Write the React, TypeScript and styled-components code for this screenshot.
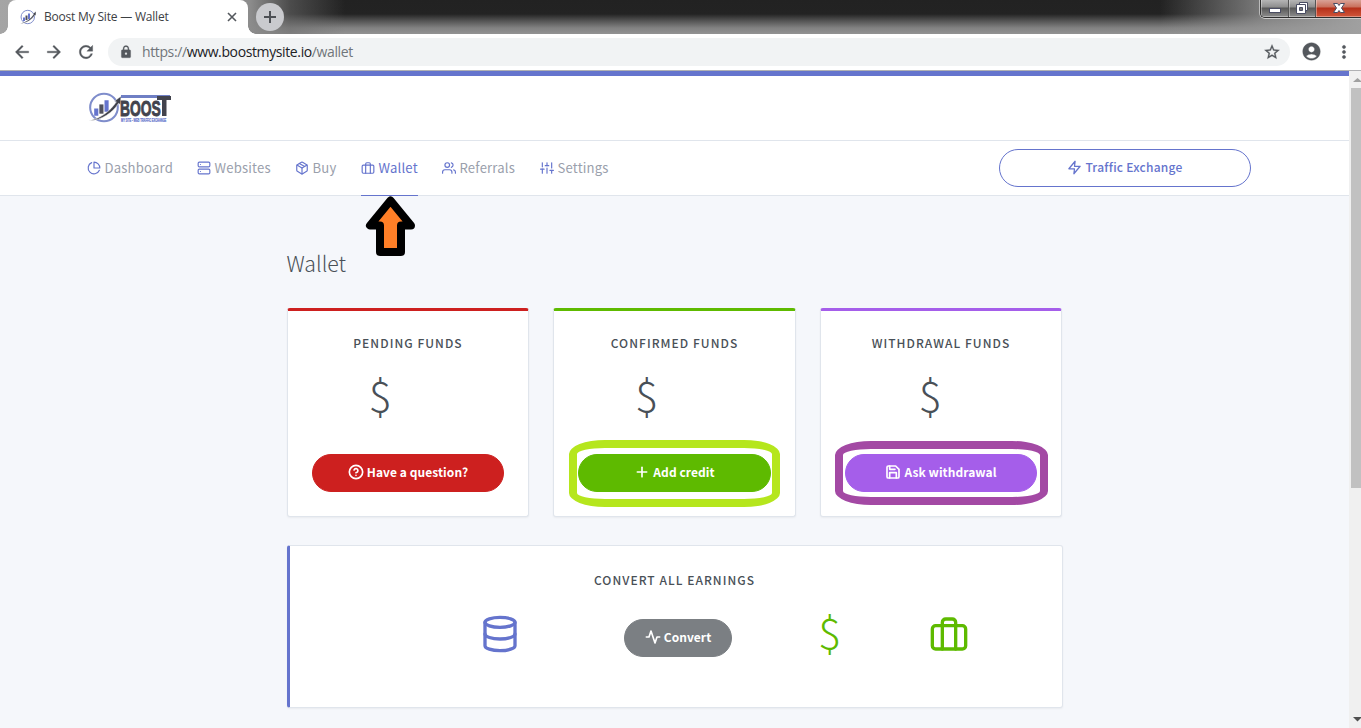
import React from 'react';
import styled, { createGlobalStyle } from 'styled-components';
import {
  FiPieChart, FiServer, FiPackage, FiBriefcase, FiUsers, FiSliders,
  FiZap, FiHelpCircle, FiPlus, FiSave, FiDatabase, FiActivity,
} from 'react-icons/fi';
import { MdArrowBack, MdArrowForward, MdRefresh, MdLock, MdStarBorder, MdAccountCircle, MdMoreVert } from 'react-icons/md';

const sans = `"Noto Sans CJK SC", "Open Sans", sans-serif`;

const Global = createGlobalStyle`
  * { box-sizing: border-box; }
  body { margin: 0; overflow: hidden; font-family: ${sans}; color: #495057; }
`;

const Window = styled.div`
  width: 1361px;
  height: 728px;
  display: flex;
  flex-direction: column;
  overflow: hidden;
  background: #fff;
`;

const TabStrip = styled.div`
  height: 34px;
  flex: none;
  display: flex;
  padding-left: 8px;
  position: relative;
  background:
    linear-gradient(90deg, #a5a5a5 0, #8c8c8c 250px, rgba(110,110,110,.55) 290px, rgba(60,60,60,0) 345px, rgba(60,60,60,0) 1160px, rgba(150,150,150,.75) 1260px, #a0a0a0 1361px),
    linear-gradient(180deg, #222 0, #232323 14px, #555 21px, #828282 28px, #929292 34px);
`;

const Tab = styled.div`
  width: 240px;
  height: 34px;
  display: flex;
  align-items: center;
  padding: 0 10px 0 12px;
  background: #fff;
  border-radius: 8px 8px 0 0;
  position: relative;
  &::before, &::after {
    content: '';
    position: absolute;
    bottom: 0;
    width: 8px;
    height: 8px;
  }
  &::before { left: -8px; background: radial-gradient(circle at 0 0, transparent 7.5px, #fff 8px); }
  &::after { right: -8px; background: radial-gradient(circle at 100% 0, transparent 7.5px, #fff 8px); }
`;

const TabTitle = styled.span`
  flex: 1;
  margin-left: 8px;
  font: 12px/16px "Open Sans", sans-serif;
  letter-spacing: -0.2px;
  color: #3c4043;
  white-space: nowrap;
`;

const NewTab = styled.div`
  width: 28px;
  height: 28px;
  margin: 3px 0 0 8px;
  border-radius: 50%;
  background: #c9cace;
  display: flex;
  align-items: center;
  justify-content: center;
`;

const Controls = styled.div`
  position: absolute;
  top: 0;
  right: 0;
  width: 101px;
  height: 18px;
  display: flex;
  border: 1px solid #2f2f2f;
  border-width: 0 0 1px 1px;
  border-radius: 0 0 0 5px;
  box-shadow: 0 1px 0 #ccc, -1px 0 0 #bbb;
  overflow: hidden;
`;

const Control = styled.div<{ $w: number; $close?: boolean }>`
  width: ${p => p.$w}px;
  flex: none;
  display: flex;
  justify-content: center;
  border-right: 1px solid ${p => (p.$close ? '#a33' : '#555')};
  box-shadow: inset 0 -1px 0 rgba(255,255,255,.35), inset 1px 0 0 rgba(255,255,255,.35);
  background: ${p => p.$close
    ? 'linear-gradient(180deg, #d9a296 0, #c9705c 7px, #b5301a 8px, #d1563a 17px)'
    : 'linear-gradient(180deg, #b5b5b5 0, #8e8e8e 7px, #585858 8px, #8d8d8d 17px)'};
`;

const Toolbar = styled.div`
  height: 37px;
  flex: none;
  display: flex;
  align-items: center;
  padding: 0 7px 1px 12px;
  border-bottom: 1px solid #b0b1b4;
  color: #54585d;
  svg { flex: none; }
  path:not([fill="none"]) { stroke: currentColor; stroke-width: 0.4px; }
`;

const NavButtons = styled.div`
  display: flex;
  gap: 12px;
`;

const Address = styled.div`
  width: 1182px;
  flex: none;
  height: 28px;
  margin-left: 12px;
  padding: 0 9px 0 11px;
  display: flex;
  align-items: center;
  border-radius: 14px;
  background: #f1f3f4;
`;

const Url = styled.span`
  flex: 1;
  margin-left: 9px;
  font: 14px/20px "Open Sans", sans-serif;
  letter-spacing: -0.38px;
  color: #70757a;
  b { font-weight: 400; color: #202124; }
`;

const ToolbarEnd = styled.div`
  display: flex;
  align-items: center;
  gap: 12px;
  margin-left: 11px;
`;

const Viewport = styled.div`
  flex: 1;
  min-height: 0;
  display: flex;
`;

const Page = styled.div`
  width: 1349px;
  position: relative;
  background: #f5f7fb;
  border-top: 5px solid #6574cd;
`;

const Header = styled.header`
  height: 65px;
  padding: 15px 0 0 88px;
  background: #fff;
  border-bottom: 1px solid #e0e5ec;
`;

const NavBar = styled.nav`
  height: 55px;
  display: flex;
  justify-content: space-between;
  padding: 0 98px 0 87px;
  background: #fff;
  border-bottom: 1px solid #e0e5ec;
`;

const NavItems = styled.div`
  display: flex;
  gap: 24px;
`;

const NavItem = styled.a<{ $active?: boolean; $w: number }>`
  width: ${p => p.$w}px;
  height: 55px;
  display: flex;
  align-items: center;
  gap: 4px;
  font-size: 13.1px;
  line-height: 20px;
  letter-spacing: 0.2px;
  white-space: nowrap;
  color: ${p => (p.$active ? '#6574cd' : '#9aa0ac')};
  border-bottom: 1px solid ${p => (p.$active ? '#6574cd' : 'transparent')};
  svg { color: #6574cd; flex: none; margin-left: -0.5px; }
`;

const Pill = styled.button<{ $bg?: string; $w: number }>`
  width: ${p => p.$w}px;
  height: 38px;
  flex: none;
  display: flex;
  align-items: center;
  justify-content: center;
  gap: 3px;
  padding: 0 0 2px;
  border-radius: 19px;
  border: 1px solid ${p => p.$bg || '#6574cd'};
  background: ${p => p.$bg || '#fff'};
  color: ${p => (p.$bg ? '#fff' : '#6574cd')};
  font: ${p => (p.$bg ? 700 : 500)} 12px/18px ${sans};
  letter-spacing: ${p => (p.$bg ? 0.06 : 0.25)}px;
  white-space: nowrap;
  svg { stroke-width: ${p => (p.$bg ? 2.5 : 2)}px; }
`;

const NavAction = styled.div`
  padding-top: 8px;
`;

const Content = styled.main`
  width: 776px;
  margin-left: 287px;
  padding-top: 49px;
`;

const Title = styled.h1`
  margin: 0 0 0 -0.5px;
  font-size: 21.3px;
  font-weight: 300;
  line-height: 36px;
`;

const Cards = styled.div`
  width: 775px;
  display: grid;
  grid-template-columns: 242px 243px 242px;
  gap: 24px;
  margin-top: 27px;
`;

const Card = styled.section<{ $accent: string }>`
  height: 209px;
  display: flex;
  flex-direction: column;
  align-items: center;
  position: relative;
  padding-top: 20px;
  background: #fff;
  border: 1px solid #e0e5ec;
  border-top: 3px solid ${p => p.$accent};
  border-radius: 3px;
  box-shadow: 0 1px 2px rgba(0,0,0,.05);
`;

const CardTitle = styled.h2`
  margin: 0;
  font-size: 12px;
  font-weight: 500;
  line-height: 24px;
  letter-spacing: 1.04px;
  white-space: nowrap;
`;

const Amount = styled.div<{ $shift?: number }>`
  height: 60px;
  margin: 8px 0 31px;
  padding-right: ${p => p.$shift || 0}px;
  font-size: 43px;
  font-weight: 300;
  line-height: 60px;
`;

const Ring = styled.div<{ $color: string; $w: number; $h: number; $x: number; $y: number }>`
  position: absolute;
  left: ${p => p.$x}px;
  top: ${p => p.$y}px;
  width: ${p => p.$w}px;
  height: ${p => p.$h}px;
  border: 8px solid ${p => p.$color};
  border-radius: 36px / 14px;
`;

const ConvertCard = styled.section`
  height: 163px;
  margin-top: 28px;
  padding: 22px 0 0;
  background: #fff;
  border: 1px solid #e0e5ec;
  border-left: 3px solid #6574cd;
  border-radius: 3px;
  box-shadow: 0 1px 2px rgba(0,0,0,.05);
  text-align: center;
  h2 { padding-right: 3px; }
`;

const ConvertRow = styled.div`
  display: flex;
  align-items: center;
  height: 60px;
  margin-top: 13px;
  padding-left: 190px;
`;

const Slot = styled.div<{ $w: number; $top?: number; $color?: string }>`
  width: ${p => p.$w}px;
  height: 60px;
  padding-top: ${p => p.$top || 0}px;
  color: ${p => p.$color || 'inherit'};
  text-align: left;
  svg { display: block; }
`;

const Currency = styled.div`
  margin: -5px 0 0 -1px;
  font-size: 43px;
  font-weight: 300;
  line-height: 60px;
`;

const Pointer = styled.svg`
  position: absolute;
  left: 364px;
  top: 118px;
`;

const Scrollbar = styled.div`
  width: 12px;
  display: flex;
  flex-direction: column;
  justify-content: space-between;
  overflow: hidden;
  background: #f0f0f0;
  svg { display: block; flex: none; }
`;

const Thumb = styled.div`
  height: 400px;
  margin: 0 0 auto 2px;
  background: #c1c1c1;
`;

const MarkSvg = styled.svg`
  flex: none;
`;

const Mark = ({ size }: { size: number }) => (
  <MarkSvg width={size} height={size} viewBox="0 0 32 32" fill="none">
    <circle cx="15.500" cy="16" r="13.4" stroke="#7f8dcb" strokeWidth="2" />
    <path d="M6 17h4v7H6zM16 9h4v11h-4z" fill="#6574cd" />
    <path d="M11 13h4v9h-4z" fill="#50515d" />
    <path d="M1 29C13 26 21 20 27.500 10.500l-2-.5L32 5l-.5 8-2-1C24 21 14 28 1 29z" fill="#3f414b" stroke="#fff" strokeWidth=".5" />
  </MarkSvg>
);

const LogoRow = styled.div`
  display: flex;
  align-items: flex-start;
`;

const Wordmark = styled.svg`
  display: block;
  margin-left: -2px;
`;

const App = () => (
  <>
    <Global />
    <Window>
      <TabStrip>
        <Tab>
          <Mark size={16} />
          <TabTitle>Boost My Site — Wallet</TabTitle>
          <svg width="12" height="12" viewBox="0 0 12 12" stroke="#54585d" strokeWidth="1.6"><path d="M2 2l8 8M10 2l-8 8" /></svg>
        </Tab>
        <NewTab>
          <svg width="12" height="12" viewBox="0 0 12 12" stroke="#4d5055" strokeWidth="2"><path d="M6 0v12M0 6h12" /></svg>
        </NewTab>
        <Controls>
          <Control $w={28}>
            <svg width="14" height="17"><rect x="1.500" y="8.500" width="11" height="4" fill="#fff" stroke="#4a4d63" /></svg>
          </Control>
          <Control $w={27}>
            <svg width="14" height="17" fill="#fff" stroke="#4a4d63">
              <path d="M4.500 2.500h8v8h-8z" /><path d="M1.500 4.500h9v9h-9z" /><path d="M4.500 7.500h3v3h-3z" fill="#777" />
            </svg>
          </Control>
          <Control $w={47} $close>
            <svg width="14" height="17" fill="#fff" stroke="#4a4d63"><path d="M1.500 3.500h4l1.500 2 1.500-2h4L9.500 8l3 4.500h-4L7 10.500l-1.500 2h-4L4.500 8z" /></svg>
          </Control>
        </Controls>
      </TabStrip>
      <Toolbar>
        <NavButtons>
          <MdArrowBack size={20} /><MdArrowForward size={20} /><MdRefresh size={20} />
        </NavButtons>
        <Address>
          <MdLock size={14} />
          <Url>https://<b>www.boostmysite.io</b>/wallet</Url>
          <MdStarBorder size={18} />
        </Address>
        <ToolbarEnd>
          <MdAccountCircle size={21} /><MdMoreVert size={20} />
        </ToolbarEnd>
      </Toolbar>
      <Viewport>
        <Page>
          <Header>
            <LogoRow>
              <Mark size={33} />
              <Wordmark width="56" height="36" viewBox="0 0 56 36">
                <path d="M2 4h49v3H2z" fill="#6f7fc4" />
                <g transform="translate(1 24.500) scale(.63 1)">
                  <text fontFamily="Liberation Sans" fontWeight="700" fontSize="22" fill="#42434d" stroke="#42434d" strokeWidth=".9">BOOS</text>
                </g>
                <path d="M38 5h14v4h-4.500v16H43V9h-5z" fill="#42434d" />
                <g transform="translate(2 30.500) scale(.57 1)">
                  <text fontFamily="Liberation Sans" fontWeight="700" fontSize="4.500" fill="#6574cd" stroke="#6574cd" strokeWidth=".2">MY SITE - WEB TRAFFIC EXCHANGE</text>
                </g>
              </Wordmark>
            </LogoRow>
          </Header>
          <NavBar>
            <NavItems>
              <NavItem $w={86}><FiPieChart size={14} />Dashboard</NavItem>
              <NavItem $w={74}><FiServer size={14} />Websites</NavItem>
              <NavItem $w={42}><FiPackage size={14} />Buy</NavItem>
              <NavItem $w={57} $active><FiBriefcase size={14} />Wallet</NavItem>
              <NavItem $w={74}><FiUsers size={14} />Referrals</NavItem>
              <NavItem $w={70}><FiSliders size={14} />Settings</NavItem>
            </NavItems>
            <NavAction>
              <Pill $w={252}><FiZap size={15} />Traffic Exchange</Pill>
            </NavAction>
          </NavBar>
          <Content>
            <Title>Wallet</Title>
            <Cards>
              <Card $accent="#cd201f">
                <CardTitle>PENDING FUNDS</CardTitle>
                <Amount $shift={56}>$</Amount>
                <Pill $w={192} $bg="#cd201f"><FiHelpCircle size={16} />Have a question?</Pill>
              </Card>
              <Card $accent="#5eba00">
                <CardTitle>CONFIRMED FUNDS</CardTitle>
                <Amount $shift={56}>$</Amount>
                <Pill $w={193} $bg="#5eba00"><FiPlus size={16} />Add credit</Pill>
                <Ring $color="#b5e61d" $x={15} $y={129} $w={211} $h={67} />
              </Card>
              <Card $accent="#a55eea">
                <CardTitle>WITHDRAWAL FUNDS</CardTitle>
                <Amount $shift={22}>$</Amount>
                <Pill $w={192} $bg="#a55eea"><FiSave size={16} />Ask withdrawal</Pill>
                <Ring $color="#a349a4" $x={14} $y={130} $w={213} $h={64} />
              </Card>
            </Cards>
            <ConvertCard>
              <CardTitle>CONVERT ALL EARNINGS</CardTitle>
              <ConvertRow>
                <Slot $w={144} $top={9} $color="#6574cd"><FiDatabase size={40} /></Slot>
                <Slot $w={195} $top={14}><Pill $w={108} $bg="#7b7f83"><FiActivity size={16} />Convert</Pill></Slot>
                <Slot $w={110} $color="#5eba00"><Currency>$</Currency></Slot>
                <Slot $w={60} $top={9} $color="#5eba00"><FiBriefcase size={40} /></Slot>
              </ConvertRow>
            </ConvertCard>
          </Content>
          <Pointer width="54" height="64" viewBox="364 194 54 64">
            <path d="M390.500 200.500L370 225.500h10V252h21v-26.500h10z" fill="#ff7f27" stroke="#000" strokeWidth="8" strokeLinejoin="round" />
          </Pointer>
        </Page>
        <Scrollbar>
          <svg width="12" height="17"><path d="M4 11l4.500-4 4.500 4z" fill="#a0a0a0" /></svg>
          <Thumb />
          <svg width="12" height="17"><path d="M4 6h9L8.500 10.500z" fill="#505050" /></svg>
        </Scrollbar>
      </Viewport>
    </Window>
  </>
);

export default App;
